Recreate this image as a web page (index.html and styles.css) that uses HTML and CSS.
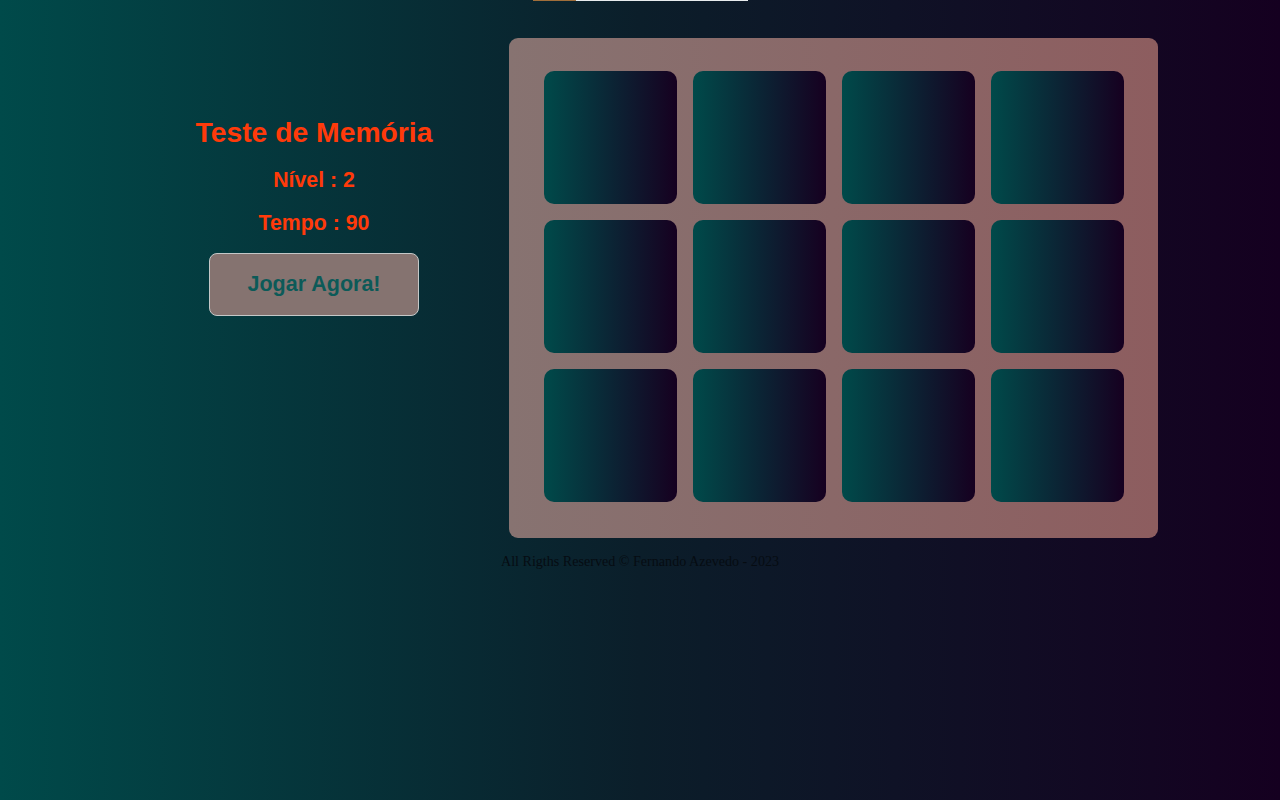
FILE: index.html
```html
<!DOCTYPE html>
<html lang="pt-BR">
<head>
<meta charset="utf-8">
<title>Teste de Memória</title>
<link rel="stylesheet" href="styles.css">
</head>
<body>
<div class="topbar"><div class="topbar-fill"></div></div>
<main class="layout">
  <section class="panel">
    <h1 class="title">Teste de Memória</h1>
    <p class="stat">Nível : 2</p>
    <p class="stat">Tempo : 90</p>
    <button class="play">Jogar Agora!</button>
  </section>
  <section class="board">
    <div class="card"></div><div class="card"></div><div class="card"></div><div class="card"></div>
    <div class="card"></div><div class="card"></div><div class="card"></div><div class="card"></div>
    <div class="card"></div><div class="card"></div><div class="card"></div><div class="card"></div>
  </section>
</main>
<footer class="footer">All Rigths Reserved © Fernando Azevedo - 2023</footer>
</body>
</html>
```
FILE: styles.css
```css
html, body {
  margin: 0;
  padding: 0;
  height: 100%;
}
body {
  background: linear-gradient(to right, #004a4a 0%, #0b1e2a 50%, #150020 100%);
  font-family: "Liberation Sans", Arial, sans-serif;
  min-height: 800px;
}
.topbar {
  width: 215px;
  height: 1px;
  background: #e8ecee;
  display: flex;
  margin-left: 533px;
}
.topbar-fill {
  width: 43px;
  background: #a06e3a;
}
.layout {
  display: flex;
  align-items: flex-start;
  margin-top: 37px;
  padding-left: 164px;
  gap: 45px;
}
.panel {
  width: 300px;
  display: flex;
  flex-direction: column;
  align-items: center;
  padding-top: 78px;
  gap: 20px;
}
.title {
  margin: 0;
  font-size: 28.3px;
  line-height: 32px;
  font-weight: bold;
  color: #ff3a0a;
}
.stat {
  margin: 0;
  font-size: 21.3px;
  line-height: 24px;
  font-weight: bold;
  color: #ff3a0a;
}
.stat + .stat {
  margin-top: -1px;
}
.play {
  margin-top: -2px;
  width: 210px;
  height: 63px;
  border: 1px solid #c4c8c8;
  border-radius: 8px;
  background: #857370;
  color: #0c5a58;
  font-family: "Liberation Sans", Arial, sans-serif;
  font-size: 21.5px;
  font-weight: bold;
}
.board {
  width: 649px;
  height: 500px;
  box-sizing: border-box;
  padding: 33px 34px 36px 35px;
  border-radius: 9px;
  background: linear-gradient(to right, #877371, #8d5d5f);
  display: grid;
  grid-template-columns: repeat(4, 133px);
  grid-template-rows: repeat(3, 133px);
  gap: 16px;
}
.card {
  border-radius: 10px;
  background: linear-gradient(to right, #004a4a, #160020);
}
.footer {
  margin-top: 15px;
  text-align: center;
  font-family: "Liberation Serif", "Times New Roman", serif;
  font-size: 14.1px;
  line-height: 16px;
  color: #060c12;
}
```
